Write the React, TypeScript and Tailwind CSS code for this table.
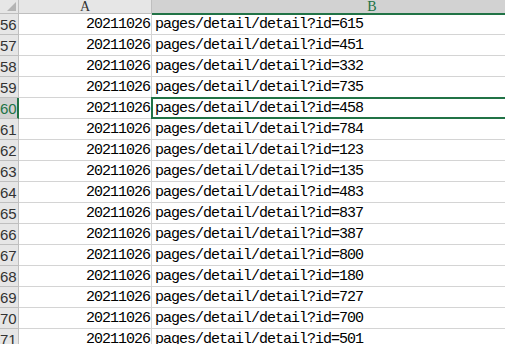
const ids = [615, 451, 332, 735, 458, 784, 123, 135, 483, 837, 387, 800, 180, 727, 700, 501]

export default function App() {
  const selected = 60

  return (
    <div className="w-[505px] h-[344px] overflow-hidden bg-white">
      {/* Column headers */}
      <div className="flex h-[14px]">
        <div className="relative w-[19px] shrink-0 h-full bg-[#e6e6e6] border-r border-b border-[#bfbfbf]">
          <div className="absolute right-[2px] bottom-[2px] w-0 h-0 border-l-[9px] border-l-transparent border-b-[9px] border-b-[#b4b4b4]" />
        </div>
        <div className="w-[133px] shrink-0 h-full bg-[#e6e6e6] border-r border-b border-[#bfbfbf] flex items-center justify-center text-[14px] leading-none text-[#333] [font-family:'Liberation_Serif',serif]">
          A
        </div>
        <div className="w-[440px] shrink-0 h-[15px] bg-[#d2d2d2] border-b-2 border-[#217346] flex items-center justify-center text-[14px] leading-none text-[#217346] [font-family:'Liberation_Serif',serif]">
          B
        </div>
      </div>

      {/* Rows */}
      {ids.map((id, i) => {
        const row = 56 + i
        const isSel = row === selected
        return (
          <div key={row} className="flex h-[21px]">
            <div
              className={
                isSel
                  ? 'w-[19px] shrink-0 h-full bg-[#d2d2d2] border-r-2 border-b border-r-[#217346] border-b-[#bfbfbf] text-[#217346] text-[15px] leading-[21px] [font-family:Liberation_Sans,sans-serif] overflow-hidden'
                  : 'w-[19px] shrink-0 h-full bg-[#e6e6e6] border-r border-b border-[#bfbfbf] text-[#333] text-[15px] leading-[21px] [font-family:Liberation_Sans,sans-serif] overflow-hidden'
              }
            >
              {row}
            </div>
            <div className="w-[133px] shrink-0 h-full border-r border-b border-[#d4d4d4] flex items-end justify-end pr-[1px] pb-[2px] text-[15px] leading-none tracking-[-1px] text-black font-mono">
              20211026
            </div>
            <div className="relative w-[440px] shrink-0 h-full border-b border-[#d4d4d4] flex items-end pl-[3px] pb-[2px] text-[15px] leading-none tracking-[-1px] text-black font-mono">
              pages/detail/detail?id={id}
              {isSel && (
                <div className="absolute -left-[1px] -top-[1px] right-0 -bottom-[1px] border-2 border-[#217346]" />
              )}
            </div>
          </div>
        )
      })}
    </div>
  )
}
